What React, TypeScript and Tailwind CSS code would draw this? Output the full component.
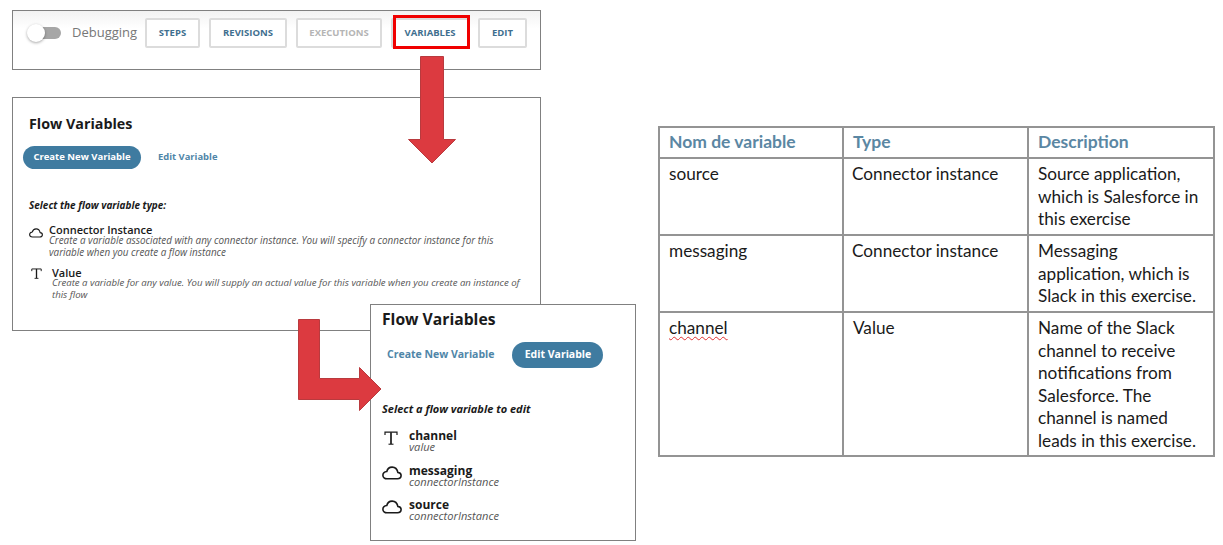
import React from "react";

const Cloud = ({ className }: { className: string }) => (
  <svg viewBox="0 0 20 14" className={className} fill="none" stroke="#1a1a1a" strokeWidth="1.6" strokeLinejoin="round">
    <path d="M5 12.8 H15.4 C17.6 12.8 19.1 11.4 19.1 9.6 C19.1 7.9 17.7 6.6 15.9 6.5 C15.3 3.3 12.9 1.1 10.1 1.1 C7.4 1.1 5.4 2.9 4.8 5.5 C2.5 5.8 0.9 7.4 0.9 9.3 C0.9 11.3 2.7 12.8 5 12.8 Z" />
  </svg>
);

const TIcon = ({ className }: { className: string }) => (
  <svg viewBox="0 0 14 14" className={className} fill="none" stroke="#1a1a1a">
    <path d="M1 4 V1.2 H13 V4" strokeWidth="1.2" />
    <path d="M7 1.2 V13" strokeWidth="1.7" />
    <path d="M4.5 13.2 H9.5" strokeWidth="1.1" />
  </svg>
);

const ToolButton = ({ label, w, muted }: { label: string; w: string; muted?: boolean }) => (
  <div
    className={`${w} h-[30px] flex items-center justify-center border-2 border-[#dcdcdc] rounded-[2px] bg-white text-[9.5px] font-bold ${
      muted ? "text-[#b5b5b5]" : "text-[#3f6f8f]"
    }`}
  >
    {label}
  </div>
);

const VarRow = ({ icon, name, type }: { icon: React.ReactNode; name: string; type: string }) => (
  <div className="flex items-start h-[34.5px]">
    <div className="w-[27px] shrink-0 flex pt-[2px]">{icon}</div>
    <div className="flex flex-col pt-[1px]">
      <span className="text-[12px] leading-[12px] font-bold text-[#1a1a1a]">{name}</span>
      <span className="text-[11.1px] leading-[10px] italic text-[#555]">{type}</span>
    </div>
  </div>
);

const rows = [
  { name: "source", type: "Connector instance", desc: ["Source application,", "which is Salesforce in", "this exercise"], h: "h-[77px]" },
  { name: "messaging", type: "Connector instance", desc: ["Messaging", "application, which is", "Slack in this exercise."], h: "h-[77px]" },
  {
    name: "channel",
    type: "Value",
    desc: ["Name of the Slack", "channel to receive", "notifications from", "Salesforce. The", "channel is named", "leads in this exercise."],
    h: "h-[144px]",
  },
];

const cell = "border-2 border-[#949494]";

export default function App() {
  return (
    <div className="relative w-[1223px] h-[545px] bg-white overflow-hidden font-['Open_Sans',sans-serif]">
      {/* toolbar panel */}
      <div className="absolute left-[12px] top-[10px] w-[529px] h-[60px] border border-[#808080] bg-gradient-to-b from-[#f2f2f2] to-white to-[30%] flex items-start pl-[14px] pt-[7px]">
        <div className="relative w-[34px] h-[30px] flex items-center shrink-0">
          <div className="w-full h-[12px] ml-[1px] rounded-full bg-[#a6a6a6]" />
          <div className="absolute left-0 top-[6px] w-[18px] h-[18px] rounded-full bg-white shadow-[0_1px_3px_rgba(0,0,0,0.35)]" />
        </div>
        <span className="ml-[11px] mt-[3px] w-[73px] text-[13px] leading-[22px] text-[#777]">Debugging</span>
        <div className="flex gap-[9px]">
          <ToolButton label="STEPS" w="w-[55px]" />
          <ToolButton label="REVISIONS" w="w-[78px]" />
          <ToolButton label="EXECUTIONS" w="w-[86px]" muted />
          <div className="relative">
            <ToolButton label="VARIABLES" w="w-[78px]" />
            <div className="absolute left-[2px] -top-[3px] w-[77px] h-[34px] border-[3px] border-[#f00000]" />
          </div>
          <ToolButton label="EDIT" w="w-[49px]" />
        </div>
      </div>

      {/* create panel */}
      <div className="absolute left-[12px] top-[97px] w-[529px] h-[234px] border border-[#808080] bg-white flex flex-col pl-[16px] pt-[14px]">
        <h2 className="text-[14.3px] leading-[24px] font-bold text-[#1a1a1a]">Flow Variables</h2>
        <div className="flex items-center mt-[10px] -ml-[6px]">
          <div className="w-[118px] h-[23px] rounded-full bg-[#3f7ba0] text-white text-[9.5px] font-bold flex items-center justify-center">
            Create New Variable
          </div>
          <span className="ml-[17px] text-[9.4px] font-bold text-[#4f86a8]">Edit Variable</span>
        </div>
        <p className="mt-[29px] text-[10px] leading-[14px] font-bold italic text-[#1a1a1a]">Select the flow variable type:</p>
        <div className="flex mt-[13px]">
          <div className="w-[20px] shrink-0 pt-[3px]">
            <Cloud className="w-[14px] h-[10px]" />
          </div>
          <div className="w-[480px]">
            <div className="text-[11px] leading-[9px] font-semibold text-[#1a1a1a]">Connector Instance</div>
            <div className="text-[9.9px] leading-[12px] italic text-[#555]">
              Create a variable associated with any connector instance. You will specify a connector instance for this variable when you create a flow instance
            </div>
          </div>
        </div>
        <div className="flex mt-[10px]">
          <div className="w-[23px] shrink-0 pl-[2px]">
            <TIcon className="w-[11px] h-[11px]" />
          </div>
          <div className="w-[480px]">
            <div className="text-[11px] leading-[9px] font-semibold text-[#1a1a1a]">Value</div>
            <div className="text-[9.6px] leading-[12px] italic text-[#555]">
              Create a variable for any value. You will supply an actual value for this variable when you create an instance of this flow
            </div>
          </div>
        </div>
      </div>

      {/* edit panel */}
      <div className="absolute left-[370px] top-[304px] w-[266px] h-[237px] border border-[#808080] bg-white flex flex-col pl-[11px] pt-[2px]">
        <h2 className="text-[15.7px] leading-[24px] font-bold text-[#1a1a1a]">Flow Variables</h2>
        <div className="flex items-center mt-[11px]">
          <span className="ml-[5px] text-[10.5px] font-bold text-[#4f86a8]">Create New Variable</span>
          <div className="ml-[18px] w-[91px] h-[26px] rounded-full bg-[#3f7ba0] text-white text-[10.5px] font-bold flex items-center justify-center">
            Edit Variable
          </div>
        </div>
        <p className="mt-[34px] text-[11px] leading-[14px] font-bold italic text-[#1a1a1a]">Select a flow variable to edit</p>
        <div className="flex flex-col mt-[13px]">
          <VarRow icon={<TIcon className="w-[14px] h-[14px] ml-[2px]" />} name="channel" type="value" />
          <VarRow icon={<Cloud className="w-[20px] h-[14px]" />} name="messaging" type="connectorInstance" />
          <VarRow icon={<Cloud className="w-[20px] h-[14px]" />} name="source" type="connectorInstance" />
        </div>
      </div>

      {/* red arrows */}
      <svg className="absolute left-0 top-0 w-[640px] h-[420px] pointer-events-none" viewBox="0 0 640 420">
        <path d="M420.5 56.5 H443.5 V139.5 H455.5 L432 163 L408.5 139.5 H420.5 Z" fill="#dc3a40" stroke="#b93a3e" />
        <path d="M298.5 319.5 H319.5 V378.5 H359.5 V367.5 L381 389 L359.5 410.5 V399.5 H298.5 Z" fill="#dc3a40" stroke="#b93a3e" />
      </svg>

      {/* table */}
      <table className="absolute left-[658px] top-[126px] w-[555px] table-fixed border-collapse font-['Lato',sans-serif] text-[17.2px] leading-[22.5px] text-[#1a1a1a]">
        <colgroup>
          <col className="w-[184px]" />
          <col className="w-[185px]" />
          <col className="w-[186px]" />
        </colgroup>
        <thead>
          <tr className="h-[31px] font-bold text-[#5b87a3] text-[17.5px]">
            <th className={`${cell} pl-[9px] text-left font-bold align-middle`}>Nom de variable</th>
            <th className={`${cell} pl-[9px] text-left font-bold align-middle`}>Type</th>
            <th className={`${cell} pl-[9px] text-left font-bold align-middle`}>Description</th>
          </tr>
        </thead>
        <tbody>
          {rows.map((r) => (
            <tr key={r.name} className={r.h}>
              <td className={`${cell} pl-[9px] pt-[4px] align-top`}>
                <span className={r.name === "channel" ? "underline decoration-wavy decoration-[#e03030] decoration-1 underline-offset-2" : ""}>{r.name}</span>
              </td>
              <td className={`${cell} pt-[4px] align-top ${r.name === "channel" ? "pl-[9px]" : "pl-[8px]"}`}>{r.type}</td>
              <td className={`${cell} pl-[9px] pt-[4px] align-top`}>
                {r.desc.map((l) => (
                  <div key={l} className="whitespace-nowrap">{l}</div>
                ))}
              </td>
            </tr>
          ))}
        </tbody>
      </table>
    </div>
  );
}
